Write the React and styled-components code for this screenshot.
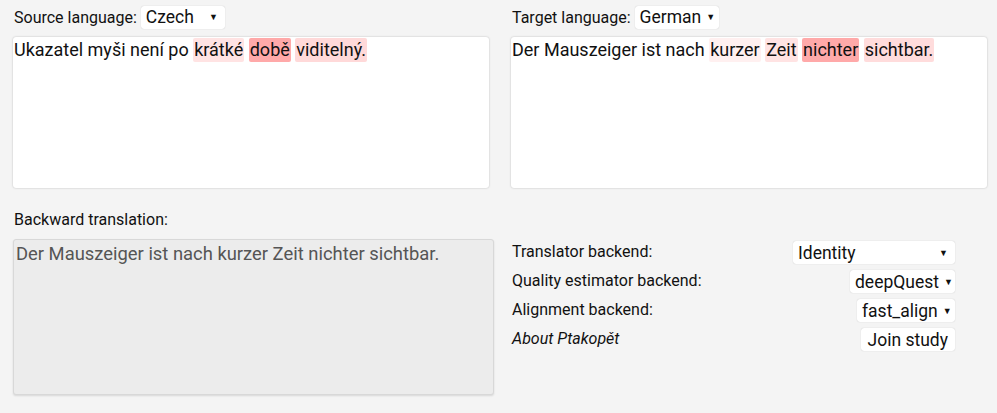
import styled, { createGlobalStyle } from "styled-components";

const GlobalStyle = createGlobalStyle`
  html, body {
    margin: 0;
    padding: 0;
    background: #f4f4f4;
    font-family: Roboto, "Liberation Sans", sans-serif;
    color: #111;
  }
`;

const Page = styled.div`
  width: 997px;
  height: 413px;
  box-sizing: border-box;
  padding: 6px 10px 0 13px;
  display: grid;
  grid-template-columns: 476px 476px;
  column-gap: 22px;
  align-content: start;
  align-items: start;
`;

const Panel = styled.div`
  display: flex;
  flex-direction: column;
`;

const Header = styled.div`
  display: flex;
  align-items: center;
  gap: 4px;
  height: 22px;
  margin-bottom: 9px;
`;

const Label = styled.span`
  font-size: 16px;
  padding-left: 1px;
`;

const Select = styled.div`
  box-sizing: border-box;
  display: inline-flex;
  align-items: center;
  justify-content: space-between;
  height: 23px;
  width: ${(p) => p.$width}px;
  padding: 0 7px 0 5px;
  background: #fff;
  border-radius: 3px;
  box-shadow: 0 0 1px rgba(0, 0, 0, 0.25);
  font-size: 17.5px;
  color: #111;
`;

const Arrow = styled.span`
  font-size: 9px;
  margin-left: 5px;
`;

const TextBox = styled.div`
  height: 151px;
  box-sizing: border-box;
  background: #fff;
  border-radius: 3px;
  box-shadow: 0 0 2px rgba(0, 0, 0, 0.25);
  padding: 1px 1px 0;
  font-size: 18px;
  line-height: 24px;
`;

const Word = styled.span`
  background: ${(p) => p.$bg};
  border-radius: 2px;
  padding: 1px 1px 2px;
`;

const BottomLeft = styled.div`
  display: flex;
  flex-direction: column;
  padding-top: 22px;
`;

const BackLabel = styled.div`
  font-size: 16px;
  line-height: 19px;
  padding-left: 1px;
  margin-bottom: 10px;
`;

const BackBox = styled.div`
  width: 481px;
  height: 156px;
  box-sizing: border-box;
  background: #ececec;
  border: 1px solid #d8d8d8;
  border-radius: 3px;
  box-shadow: 0 1px 2px rgba(0, 0, 0, 0.12);
  padding: 2px 2px;
  font-size: 18.4px;
  line-height: 24px;
  color: #555;
`;

const Settings = styled.div`
  display: grid;
  grid-template-columns: 1fr auto;
  row-gap: 6px;
  width: 444px;
  padding-top: 53px;
`;

const SettingLabel = styled.span`
  font-size: 16px;
  display: flex;
  align-items: center;
  padding-left: 1px;
  height: 23px;
  font-style: ${(p) => (p.$italic ? "italic" : "normal")};
  margin-top: -1px;
`;

const Right = styled.div`
  display: flex;
  justify-content: flex-end;
`;

const Button = styled.button`
  box-sizing: border-box;
  height: 23px;
  padding: 0 7px;
  background: #fff;
  border: none;
  border-radius: 3px;
  box-shadow: 0 0 1px rgba(0, 0, 0, 0.25);
  font-family: Roboto, "Liberation Sans", sans-serif;
  font-size: 17.5px;
  color: #111;
`;

const source = [
  ["Ukazatel myši není po ", null],
  ["krátké", "#ffe3e3"],
  [" ", null],
  ["době", "#ffa9a9"],
  [" ", null],
  ["viditelný.", "#ffd9d9"],
];

const target = [
  ["Der Mauszeiger ist nach ", null],
  ["kurzer", "#fff0f0"],
  [" ", null],
  ["Zeit", "#ffe3e3"],
  [" ", null],
  ["nichter", "#ffa9a9"],
  [" ", null],
  ["sichtbar.", "#ffdcdc"],
];

const renderWords = (list) =>
  list.map(([text, bg], i) =>
    bg ? (
      <Word key={i} $bg={bg}>
        {text}
      </Word>
    ) : (
      <span key={i}>{text}</span>
    )
  );

const App = () => {
  return (
    <>
      <GlobalStyle />
      <Page>
        <Panel>
          <Header>
            <Label>Source language:</Label>
            <Select $width={84}>
              Czech<Arrow>▼</Arrow>
            </Select>
          </Header>
          <TextBox>{renderWords(source)}</TextBox>
        </Panel>
        <Panel>
          <Header>
            <Label>Target language:</Label>
            <Select $width={84}>
              German<Arrow>▼</Arrow>
            </Select>
          </Header>
          <TextBox>{renderWords(target)}</TextBox>
        </Panel>
        <BottomLeft>
          <BackLabel>Backward translation:</BackLabel>
          <BackBox>Der Mauszeiger ist nach kurzer Zeit nichter sichtbar.</BackBox>
        </BottomLeft>
        <Settings>
          <SettingLabel>Translator backend:</SettingLabel>
          <Right>
            <Select $width={162}>
              Identity<Arrow>▼</Arrow>
            </Select>
          </Right>
          <SettingLabel>Quality estimator backend:</SettingLabel>
          <Right>
            <Select $width={105}>
              deepQuest<Arrow>▼</Arrow>
            </Select>
          </Right>
          <SettingLabel>Alignment backend:</SettingLabel>
          <Right>
            <Select $width={98}>
              fast_align<Arrow>▼</Arrow>
            </Select>
          </Right>
          <SettingLabel $italic>About Ptakopět</SettingLabel>
          <Right>
            <Button>Join study</Button>
          </Right>
        </Settings>
      </Page>
    </>
  );
};

export default App;
